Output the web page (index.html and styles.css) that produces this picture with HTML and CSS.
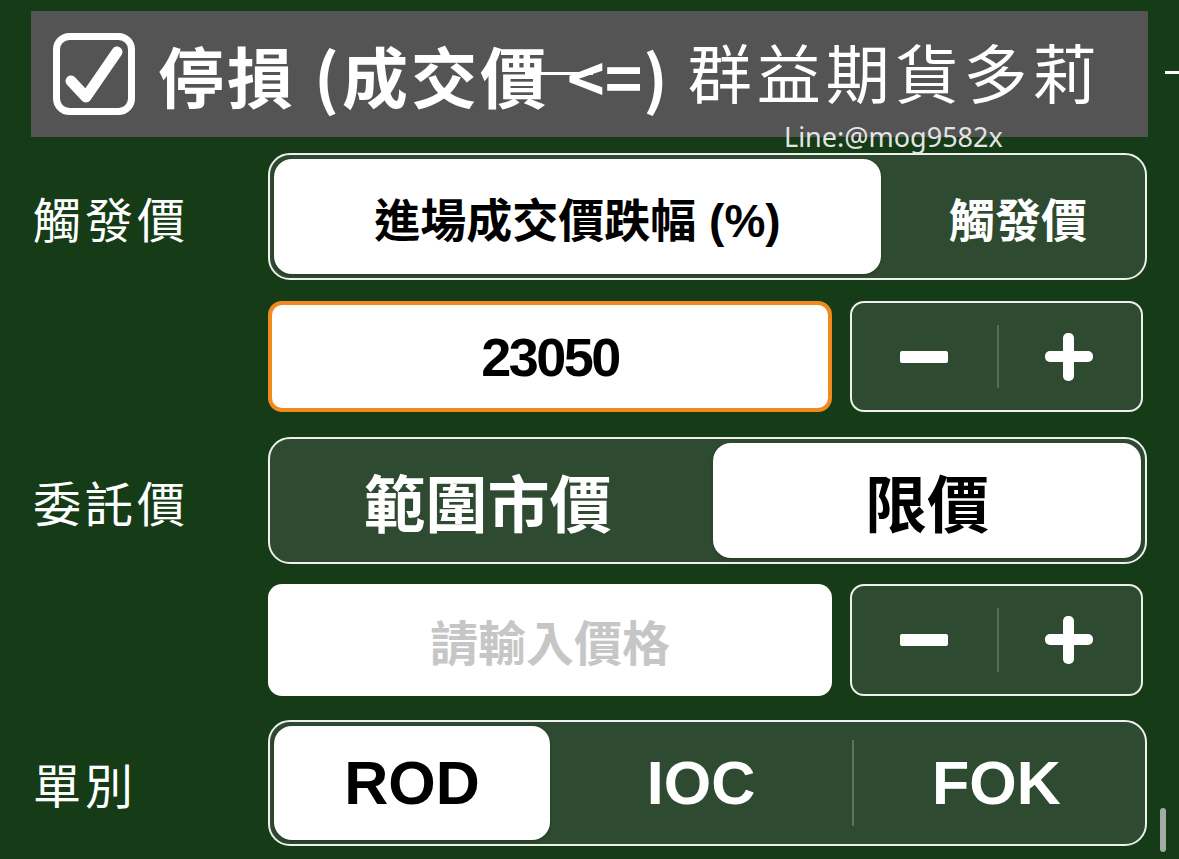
FILE: index.html
```html
<!DOCTYPE html>
<html lang="zh-Hant">
<head>
<meta charset="utf-8">
<title>停損</title>
<link rel="stylesheet" href="styles.css">
</head>
<body>
<div class="page">
  <div class="top">
    <div class="banner">
      <svg class="check" viewBox="0 0 82 82" width="82" height="82">
        <rect x="3.5" y="3.5" width="75" height="75" rx="13" fill="none" stroke="#fff" stroke-width="7"/>
        <path d="M18 48 L33 64 L64 19" fill="none" stroke="#fff" stroke-width="11" stroke-linecap="round" stroke-linejoin="round"/>
      </svg>
      <span class="title">停損 (成交價<span class="arrow">&lt;=<span class="paren">)</span></span></span>
      <span class="brand">群益期貨多莉</span>
      <span class="line-id">Line:@mog9582x</span>
    </div>
    <div class="dash"></div>
  </div>

  <div class="form">
    <div class="row r1">
      <div class="label">觸發價</div>
      <div class="seg seg-trigger">
        <div class="opt on">進場成交價跌幅 (%)</div>
        <div class="opt shift-r">觸發價</div>
      </div>
    </div>

    <div class="row r2">
      <div class="label"></div>
      <div class="inrow">
        <div class="field focus">23050</div>
        <div class="stepper">
          <div class="step"><span class="minus"></span></div>
          <div class="step sep"><span class="plus"></span></div>
        </div>
      </div>
    </div>

    <div class="row r3">
      <div class="label">委託價</div>
      <div class="seg seg-price big">
        <div class="opt shift-l">範圍市價</div>
        <div class="opt on">限價</div>
      </div>
    </div>

    <div class="row r4">
      <div class="label"></div>
      <div class="inrow">
        <div class="field placeholder">請輸入價格</div>
        <div class="stepper">
          <div class="step"><span class="minus"></span></div>
          <div class="step sep"><span class="plus"></span></div>
        </div>
      </div>
    </div>

    <div class="row r5">
      <div class="label">單別</div>
      <div class="seg seg-type big">
        <div class="opt on">ROD</div>
        <div class="opt">IOC</div>
        <div class="opt div">FOK</div>
      </div>
    </div>
  </div>
  <div class="scroll"></div>
</div>
</body>
</html>
```
FILE: styles.css
```css
html, body {
  margin: 0;
  padding: 0;
  background: #153b17;
}
.page {
  position: relative;
  width: 1179px;
  height: 859px;
  overflow: hidden;
  background: #153b17;
  font-family: "Liberation Sans", "Noto Sans CJK TC", sans-serif;
  color: #fff;
}
.top {
  display: flex;
  align-items: center;
  padding-top: 11px;
  padding-left: 31px;
}
.banner {
  position: relative;
  width: 1117px;
  height: 126px;
  background: #545454;
  display: flex;
  align-items: center;
  padding-left: 22px;
  box-sizing: border-box;
}
.check {
  flex: none;
  display: block;
}
.title {
  font-family: "Noto Sans CJK TC", sans-serif;
  font-weight: 700;
  font-size: 66px;
  letter-spacing: 3px;
  line-height: 1;
  margin-left: 23px;
  white-space: nowrap;
}
.arrow {
  position: relative;
  display: inline-block;
  margin-left: 18px;
  font-size: 64px;
  letter-spacing: 0;
}
.paren {
  margin-left: 1px;
}
.arrow::before {
  content: "";
  position: absolute;
  left: -42px;
  top: 50%;
  margin-top: -3px;
  width: 68px;
  height: 3px;
  background: #fff;
}
.brand {
  font-family: "Noto Sans CJK TC", sans-serif;
  font-weight: 400;
  font-size: 64px;
  letter-spacing: 5px;
  line-height: 1;
  margin-left: 20px;
  margin-top: -8px;
  white-space: nowrap;
}
.line-id {
  position: absolute;
  left: 753px;
  top: 107px;
  font-family: "Noto Sans", sans-serif;
  font-size: 27px;
  color: #e4e4e4;
  white-space: nowrap;
}
.dash {
  width: 14px;
  height: 3px;
  margin-left: 17px;
  margin-top: -4px;
  background: #fff;
}
.form {
  display: flex;
  flex-direction: column;
  margin-top: 16px;
}
.row {
  display: flex;
}
.r1 { height: 127px; }
.r2 { height: 111px; margin-top: 21px; }
.r3 { height: 127px; margin-top: 25px; }
.r4 { height: 112px; margin-top: 20px; }
.r5 { height: 126px; margin-top: 24px; }
.label {
  width: 268px;
  flex: none;
  box-sizing: border-box;
  padding-left: 33px;
  display: flex;
  align-items: center;
  font-family: "Noto Sans CJK TC", sans-serif;
  font-weight: 400;
  font-size: 48px;
  letter-spacing: 4px;
  color: #fff;
}
.seg {
  width: 879px;
  box-sizing: border-box;
  display: grid;
  border: 2.5px solid #eef0ee;
  border-radius: 22px;
  background: #2e4a30;
  padding: 4px;
}
.seg-trigger {
  grid-template-columns: 607px 1fr;
}
.seg-price {
  grid-template-columns: 1fr 428px;
}
.seg-type {
  grid-template-columns: 276px 1fr 289px;
}
.opt {
  display: flex;
  align-items: center;
  justify-content: center;
  font-weight: 700;
  font-size: 46px;
  color: #fff;
  border-radius: 18px;
  white-space: nowrap;
}
.opt.shift-r {
  padding-left: 14px;
}
.opt.shift-l {
  padding-right: 12px;
}
.big .opt {
  font-size: 62px;
}
.seg-type .opt {
  font-size: 61px;
}
.opt.on {
  background: #fff;
  color: #000;
  box-shadow: 0 1px 3px rgba(0,0,0,0.25);
}
.opt.div {
  position: relative;
}
.opt.div::before {
  content: "";
  position: absolute;
  left: 0;
  top: 14px;
  bottom: 14px;
  width: 2px;
  background: #5e735f;
}
.inrow {
  width: 875px;
  display: flex;
  gap: 18px;
}
.field {
  width: 564px;
  flex: none;
  box-sizing: border-box;
  background: #fff;
  border-radius: 14px;
  display: flex;
  align-items: center;
  justify-content: center;
  font-weight: 700;
  font-size: 54px;
  letter-spacing: -2.5px;
  color: #000;
}
.field.focus {
  border: 4px solid #f08a1c;
}
.field.placeholder {
  color: #c6c6c6;
  font-size: 48px;
  letter-spacing: 0;
}
.stepper {
  flex: 1;
  display: flex;
  border: 2.5px solid #eef0ee;
  border-radius: 14px;
  background: #2e4a30;
}
.step {
  flex: 1;
  display: flex;
  align-items: center;
  justify-content: center;
  position: relative;
}
.step.sep::before {
  content: "";
  position: absolute;
  left: 0;
  top: 22px;
  bottom: 22px;
  width: 2px;
  background: #566b58;
}
.minus {
  display: block;
  width: 48px;
  height: 12px;
  background: #fff;
  border-radius: 2px;
}
.plus {
  display: block;
  position: relative;
  width: 48px;
  height: 48px;
}
.plus::before,
.plus::after {
  content: "";
  position: absolute;
  background: #fff;
  border-radius: 5px;
}
.plus::before {
  left: 0;
  right: 0;
  top: 18px;
  height: 11px;
}
.plus::after {
  top: 0;
  bottom: 0;
  left: 18px;
  width: 11px;
}
.scroll {
  position: absolute;
  left: 1160px;
  top: 808px;
  width: 6px;
  height: 44px;
  border-radius: 3px;
  background: #a3aca3;
}
```
